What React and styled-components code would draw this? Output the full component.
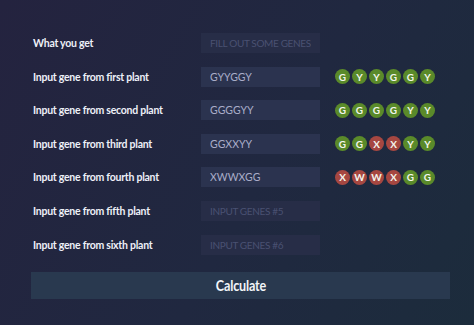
import React from "react";
import styled, { createGlobalStyle } from "styled-components";

const Global = createGlobalStyle`
  html, body { margin: 0; padding: 0; }
  body {
    width: 474px; height: 325px; overflow: hidden;
    background: linear-gradient(120deg, #24233f 0%, #202840 55%, #1c2c3c 100%);
    font-family: Lato, "Noto Sans", sans-serif;
  }
`;

const Page = styled.div`
  width: 474px;
  height: 325px;
  box-sizing: border-box;
  padding: 33px 24px 0 31px;
  display: flex;
  flex-direction: column;
`;

const Rows = styled.div`
  display: flex;
  flex-direction: column;
  gap: 13.6px;
`;

const Row = styled.div`
  display: flex;
  align-items: center;
  height: 20px;
`;

const Label = styled.label`
  width: 170px;
  padding-left: 2px;
  box-sizing: border-box;
  color: #eef0f8;
  font-weight: 700;
  font-size: 10.5px;
  letter-spacing: -0.25px;
`;

const Input = styled.input`
  width: 119px;
  height: 20px;
  box-sizing: border-box;
  border: none;
  outline: none;
  padding: 0 9px;
  background: ${p => (p.$dim ? "#272d47" : "#2b334f")};
  color: #a9adc9;
  font-family: Lato, sans-serif;
  font-size: 10.5px;
  text-transform: uppercase;
  caret-color: #8a90b0;
  &::placeholder {
    color: #4a5172;
    text-transform: uppercase;
    letter-spacing: -0.35px;
    font-size: 10px;
  }
`;

const Genes = styled.div`
  display: flex;
  gap: 2px;
  margin-left: 15px;
`;

const Gene = styled.span`
  width: 15px;
  height: 15px;
  border-radius: 50%;
  background: ${p => (p.$bad ? "#a64741" : "#5a8a2a")};
  color: #f4f6ee;
  font-weight: 700;
  font-size: 10px;
  display: flex;
  align-items: center;
  justify-content: center;
  line-height: 1;
`;

const Button = styled.button`
  margin-top: 17px;
  width: 419px;
  height: 27px;
  border: none;
  padding: 0;
  background: #29394f;
  color: #f2f4f8;
  font-family: Lato, sans-serif;
  font-weight: 700;
  font-size: 15px;
  cursor: pointer;
  display: flex;
  align-items: center;
  justify-content: center;
`;

const ButtonText = styled.span`
  display: inline-block;
  transform: scaleX(0.84);
  letter-spacing: -0.2px;
`;

const rows = [
  { label: "What you get", placeholder: "Fill out some genes e", dim: true, value: "" },
  { label: "Input gene from first plant", value: "GYYGGY" },
  { label: "Input gene from second plant", value: "GGGGYY" },
  { label: "Input gene from third plant", value: "GGXXYY" },
  { label: "Input gene from fourth plant", value: "XWWXGG" },
  { label: "Input gene from fifth plant", value: "", placeholder: "Input genes #5", focus: true },
  { label: "Input gene from sixth plant", value: "", placeholder: "Input genes #6" },
];

export default function App() {
  return (
    <>
      <Global />
      <Page>
        <Rows>
          {rows.map((r, i) => (
            <Row key={i}>
              <Label>{r.label}</Label>
              <Input
                defaultValue={r.value}
                placeholder={r.placeholder}
                $dim={r.dim || !r.value}
                autoFocus={r.focus}
                readOnly={r.dim}
              />
              {r.value && (
                <Genes>
                  {r.value.split("").map((c, j) => (
                    <Gene key={j} $bad={c === "X" || c === "W"}>{c}</Gene>
                  ))}
                </Genes>
              )}
            </Row>
          ))}
        </Rows>
        <Button><ButtonText>Calculate</ButtonText></Button>
      </Page>
    </>
  );
}
